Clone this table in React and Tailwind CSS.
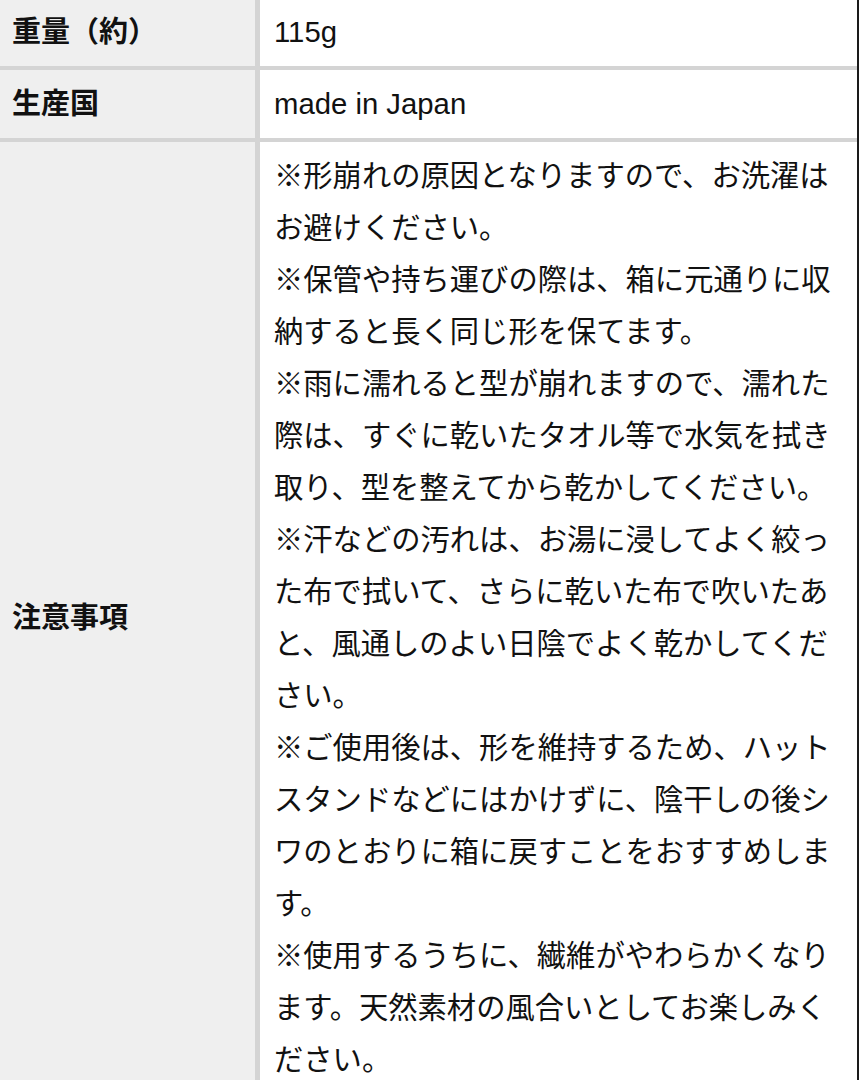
const rows = [
  { label: '重量（約）', value: ['115g'], first: true },
  { label: '生産国', value: ['made in Japan'] },
  {
    label: '注意事項',
    value: [
      '※形崩れの原因となりますので、お洗濯はお避けください。',
      '※保管や持ち運びの際は、箱に元通りに収納すると長く同じ形を保てます。',
      '※雨に濡れると型が崩れますので、濡れた際は、すぐに乾いたタオル等で水気を拭き取り、型を整えてから乾かしてください。',
      '※汗などの汚れは、お湯に浸してよく絞った布で拭いて、さらに乾いた布で吹いたあと、風通しのよい日陰でよく乾かしてください。',
      '※ご使用後は、形を維持するため、ハットスタンドなどにはかけずに、陰干しの後シワのとおりに箱に戻すことをおすすめします。',
      '※使用するうちに、繊維がやわらかくなります。天然素材の風合いとしてお楽しみください。',
    ],
  },
];

export default function App() {
  return (
    <div
      className="w-[859px] h-[1080px] overflow-hidden bg-[#d4d4d4] text-[#111] border-r-2 border-[#1a1a1a]"
      style={{ fontFamily: '"Liberation Sans", "Noto Sans CJK JP", sans-serif' }}
    >
      <div className="grid grid-cols-[255px_1fr] gap-x-[5px] gap-y-[4px]">
        {rows.map((r) => (
          <div key={r.label} className="contents">
            {/* label */}
            <div
              className={
                'bg-[#efefef] flex items-center pl-[12px] text-[29px] leading-[52px] font-bold ' +
                (r.first ? 'pt-[6px] pb-[8px]' : 'py-[8px]')
              }
            >
              {r.label}
            </div>
            {/* value */}
            <div
              className={
                'bg-white pl-[14px] pr-[15px] text-[29.3px] leading-[52px] ' +
                (r.first ? 'pt-[6px] pb-[8px]' : 'py-[8px]')
              }
            >
              {r.value.map((v, i) => (
                <p key={i}>{v}</p>
              ))}
            </div>
          </div>
        ))}
      </div>
    </div>
  );
}
